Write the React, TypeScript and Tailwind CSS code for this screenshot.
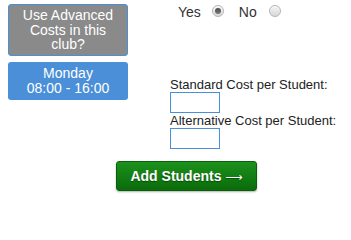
import React from "react";

function Radio({ checked }: { checked?: boolean }) {
  return (
    <span className="w-[12px] h-[12px] rounded-full border border-[#b4b4b4] bg-gradient-to-b from-[#f4f4f4] to-[#d8d8d8] flex items-center justify-center shadow-[inset_0_1px_1px_rgba(255,255,255,0.8)]">
      {checked && <span className="w-[6px] h-[6px] rounded-full bg-gradient-to-b from-[#4a4a4a] to-[#7a7a7a]" />}
    </span>
  );
}

export default function App() {
  return (
    <div className="w-[351px] h-[202px] bg-white font-['Liberation_Sans',Arial,sans-serif] text-[#222]">
      <div className="flex items-start">
        {/* Left column: info boxes */}
        <div className="pl-[8px] pt-[4px] w-[128px] flex flex-col gap-[6px]">
          <div className="w-[120px] bg-[#8a8a8a] border border-[#4a90d9] rounded-[3px] text-white text-[14px] leading-[14.5px] text-center pt-[3px] pb-[3px]">
            Use Advanced
            <br />
            Costs in this
            <br />
            club?
          </div>
          <div className="w-[120px] bg-[#4a8fd8] rounded-[3px] text-white text-[14px] leading-[15px] text-center pt-[4px] pb-[4px]">
            Monday
            <br />
            08:00 - 16:00
          </div>
        </div>

        {/* Right column: toggle + costs */}
        <div className="ml-[42px] pt-[4px] flex flex-col">
          <div className="flex items-start pl-[8px] text-[14px] leading-[16px] text-[#333]">
            <span>Yes</span>
            <span className="ml-[11px] mt-[1px]">
              <Radio checked />
            </span>
            <span className="ml-[15px]">No</span>
            <span className="ml-[12px] mt-[1px]">
              <Radio />
            </span>
          </div>

          <div className="mt-[57px] text-[13px] leading-[15px] text-[#222]">
            <div>Standard Cost per Student:</div>
            <input className="block w-[50px] h-[21px] border border-[#4a90d9] outline-none bg-white" />
            <div>Alternative Cost per Student:</div>
            <input className="block w-[50px] h-[21px] border border-[#4a90d9] outline-none bg-white" />
          </div>
        </div>
      </div>

      <div className="pl-[116px] mt-[12px]">
        <button className="w-[141px] h-[30px] rounded-[3px] border border-[#0b5e0b] bg-gradient-to-b from-[#1c911c] to-[#0a6c0a] text-white text-[14px] font-bold shadow-[0_1px_2px_rgba(0,0,0,0.3)] [text-shadow:0_1px_1px_rgba(0,0,0,0.4)]">
          Add Students <span className="font-['DejaVu_Sans',sans-serif] font-normal text-[12px]">⟶</span>
        </button>
      </div>
    </div>
  );
}
